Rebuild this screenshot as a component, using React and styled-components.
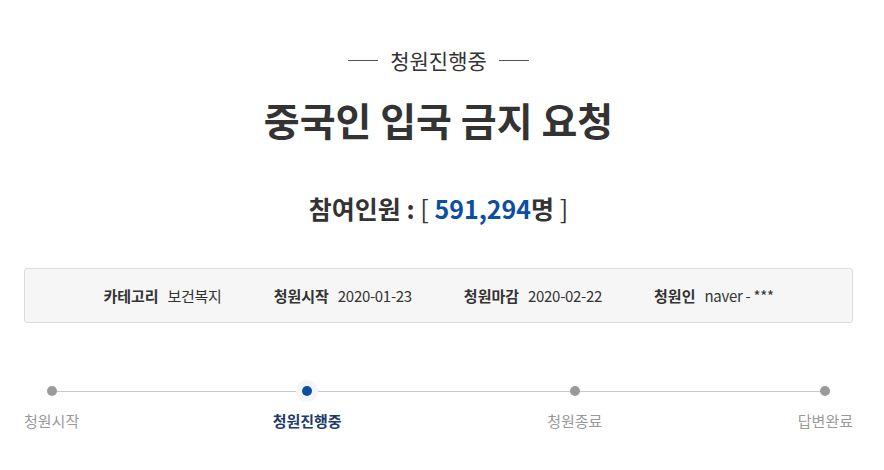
import React from "react";
import styled, { createGlobalStyle } from "styled-components";

const Global = createGlobalStyle`
  html, body { margin: 0; padding: 0; background: #fff; }
  body { font-family: "Noto Sans CJK KR", "Noto Sans", sans-serif; color: #333; }
`;

const Page = styled.div`
  width: 884px;
  padding: 0 31px 0 24px;
  box-sizing: border-box;
`;

const Head = styled.header`
  display: flex;
  flex-direction: column;
  align-items: center;
`;

const Status = styled.div`
  margin-top: 44px;
  display: flex;
  align-items: center;
  gap: 12px;
  font-size: 21px;
  line-height: 32px;
  color: #333;
  &::before, &::after {
    content: "";
    width: 30px;
    height: 1px;
    background: #555;
  }
`;

const Title = styled.h1`
  margin: 17px 0 0;
  font-size: 39px;
  font-weight: 700;
  line-height: 52px;
  color: #333;
`;

const Count = styled.div`
  margin-top: 45px;
  font-size: 25px;
  font-weight: 700;
  line-height: 36px;
  color: #333;
`;

const Bracket = styled.span`
  font-weight: 400;
`;

const Num = styled.span`
  color: #0b4ea2;
`;

const Info = styled.ul`
  margin: 42px 0 0;
  padding: 0;
  list-style: none;
  height: 55px;
  border: 1px solid #dcdcdc;
  border-radius: 3px;
  background: #f6f6f6;
  display: flex;
  justify-content: center;
  align-items: center;
  gap: 52px;
  box-sizing: border-box;
`;

const Item = styled.li`
  display: flex;
  align-items: center;
  gap: 9px;
  line-height: 20px;
`;

const Label = styled.strong`
  font-size: 15px;
  font-weight: 700;
  color: #333;
`;

const Value = styled.span`
  font-size: 15px;
  letter-spacing: -0.3px;
  color: #333;
`;

const Steps = styled.ol`
  position: relative;
  margin: 63px 0 0;
  padding: 0;
  list-style: none;
  display: grid;
  grid-template-columns: auto 194fr auto 206fr auto 196fr auto;
  &::before {
    content: "";
    position: absolute;
    left: 26px;
    right: 27px;
    top: 5px;
    height: 1px;
    background: #c8c8c8;
  }
`;

const Step = styled.li`
  position: relative;
  grid-column: ${p => p.$col};
  display: flex;
  flex-direction: column;
  align-items: center;
  gap: 15px;
  font-size: 15px;
  line-height: 20px;
  color: ${p => (p.$active ? "#1d3a6b" : "#999")};
  font-weight: ${p => (p.$active ? 700 : 400)};
`;

const Dot = styled.span`
  width: 10px;
  height: 10px;
  border-radius: 50%;
  background: ${p => (p.$active ? "#0b4ea2" : "#9a9a9a")};
  box-shadow: ${p => (p.$active ? "0 0 0 6px #f2f6fc" : "none")};
  position: relative;
`;

const steps = [
  { t: "청원시작" },
  { t: "청원진행중", active: true },
  { t: "청원종료" },
  { t: "답변완료" },
];

const info = [
  ["카테고리", "보건복지"],
  ["청원시작", "2020-01-23"],
  ["청원마감", "2020-02-22"],
  ["청원인", "naver - ***"],
];

export default function App() {
  return (
    <Page>
      <Global />
      <Head>
        <Status>청원진행중</Status>
        <Title>중국인 입국 금지 요청</Title>
        <Count>
          참여인원 : <Bracket>[</Bracket> <Num>591,294</Num>명 <Bracket>]</Bracket>
        </Count>
      </Head>
      <Info>
        {info.map(([l, v]) => (
          <Item key={l}>
            <Label>{l}</Label>
            <Value>{v}</Value>
          </Item>
        ))}
      </Info>
      <Steps>
        {steps.map((s, i) => (
          <Step key={s.t} $active={s.active} $col={i * 2 + 1}>
            <Dot $active={s.active} />
            {s.t}
          </Step>
        ))}
      </Steps>
    </Page>
  );
}
